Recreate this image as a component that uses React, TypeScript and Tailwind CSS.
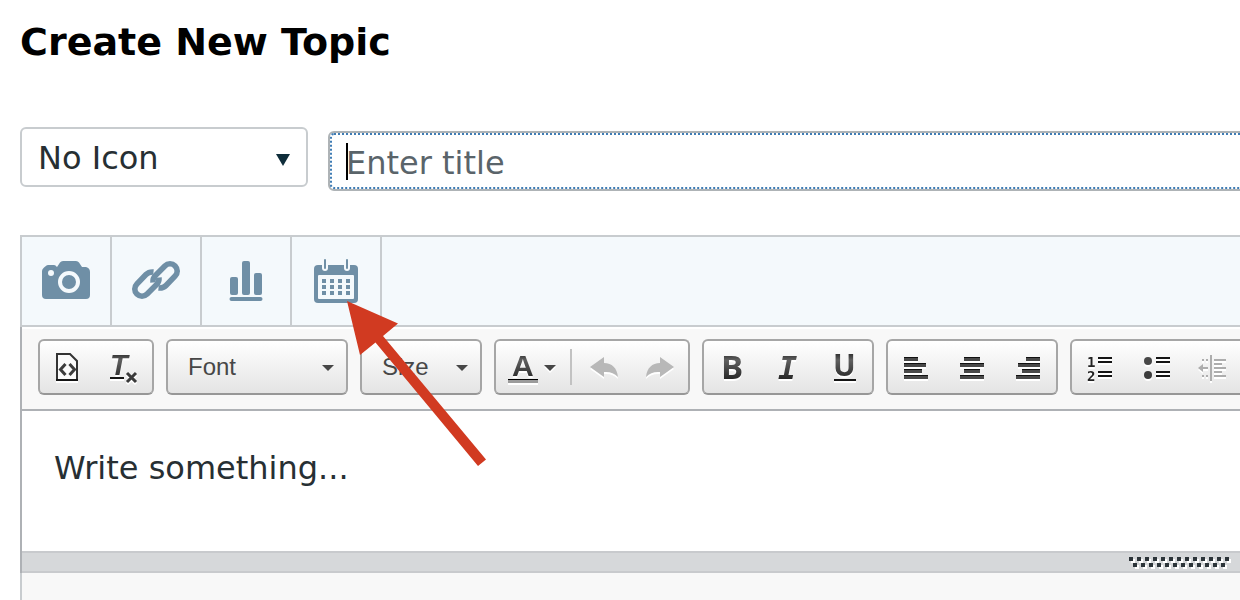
import type { ReactNode } from "react";

const verdana = "font-['DejaVu_Sans',sans-serif]";
const barFill = "url(#glyph-fill)";

function Tab({ label, children }: { label: string; children: ReactNode }) {
  return (
    <div className="relative border-r-2 border-[#c8cccf]">
      <button type="button" aria-label={label} className="block">
        <svg width="88" height="88" viewBox="0 0 88 88" fill="#6f8fa6">
          {children}
        </svg>
      </button>
    </div>
  );
}

function Group({ children }: { children: ReactNode }) {
  return (
    <div className="flex h-14 shrink-0 items-stretch rounded-md border-2 border-[#a6a6a6] border-b-[#979797] bg-linear-to-b from-white to-[#e4e4e4]">
      {children}
    </div>
  );
}

function Tool({ label, disabled, width = 56, children }: { label: string; disabled?: boolean; width?: number; children: ReactNode }) {
  return (
    <button type="button" aria-label={label} disabled={disabled} className="block shrink-0">
      <svg
        width={width}
        height="52"
        viewBox={`0 0 ${width} 52`}
        fill={barFill}
        className="drop-shadow-[0_2px_0_#ffffff]"
      >
        {children}
      </svg>
    </button>
  );
}

function Combo({ label, wide }: { label: string; wide?: boolean }) {
  return (
    <Group>
      <div className="grid items-center">
        <select
          aria-label={label}
          className={`${wide ? "w-[178px]" : "w-[118px]"} col-start-1 row-start-1 h-full appearance-none bg-transparent pl-5 font-['Liberation_Sans',Arial,sans-serif] text-2xl text-[#474747] outline-none`}
        >
          <option>{label}</option>
        </select>
        <svg width="12" height="6" viewBox="0 0 12 6" fill="#474747" className="pointer-events-none col-start-1 row-start-1 mr-3 mt-[2px] justify-self-end">
          <path d="M0 0H12L6 6Z" />
        </svg>
      </div>
    </Group>
  );
}

function Bars({ rows }: { rows: number[][] }) {
  return (
    <>
      {rows.map(([x, end], i) => (
        <g key={i}>
          <rect x={x} y={16 + i * 6} width={end - x} height="4" fill="#484848" />
          <rect x={x} y={16 + i * 6} width={end - x} height="1" fill="#111111" />
        </g>
      ))}
    </>
  );
}

function ListBars({ x }: { x: number }) {
  return (
    <>
      {[16, 20, 30, 34].map((y) => (
        <rect key={y} x={x} y={y} width="14" height="2" fill="#151515" />
      ))}
    </>
  );
}

function IndentShape() {
  return (
    <g fill="#adadad">
      <rect x="26" y="14" width="2" height="26" />
      <path d="M14 27l5-4v3h5v2h-5v3z" />
      {[18, 34].map((y) => (
        <g key={y}>
          <rect x="18" y={y} width="2" height="2" />
          <rect x="22" y={y} width="2" height="2" />
        </g>
      ))}
      {[12, 8, 12, 8, 12].map((w, i) => (
        <rect key={i} x="30" y={18 + i * 4} width={w} height="2" />
      ))}
    </g>
  );
}

const undoPath = "M14 26L28 16V22C36 22 41 27 42 36C38 32 34 30.500 28 31V36Z";

export default function App() {
  return (
    <main className={`${verdana} flex min-h-screen flex-col overflow-x-hidden bg-white pl-5 pt-5 text-[#272f33]`}>
      <svg width="0" height="0" className="absolute" aria-hidden="true">
        <defs>
          <linearGradient id="glyph-fill" gradientUnits="userSpaceOnUse" x1="0" y1="12" x2="0" y2="40">
            <stop offset="0" stopColor="#2a2a2a" />
            <stop offset="0.25" stopColor="#606060" />
            <stop offset="1" stopColor="#222222" />
          </linearGradient>
        </defs>
      </svg>

      <h1 className="text-[38px] font-bold leading-[44px] text-black">Create New Topic</h1>

      <div className="-mr-2 mt-[63px] flex items-start gap-5">
        <div className="grid shrink-0 items-center">
          <select
            aria-label="Topic icon"
            className="col-start-1 row-start-1 h-[60px] w-72 appearance-none rounded-md border-2 border-[#c8cccf] bg-white pl-4 pt-[2px] text-[32px] leading-none outline-none"
          >
            <option>No Icon</option>
          </select>
          <svg width="14" height="12" viewBox="0 0 14 12" fill="#0f2d3a" className="pointer-events-none col-start-1 row-start-1 mr-[18px] mt-[6px] justify-self-end">
            <path d="M0 0H14L7 12Z" />
          </svg>
        </div>
        <div className="relative mt-1 grow">
          <input
            type="text"
            aria-label="Title"
            placeholder="Enter title"
            className="h-[60px] w-full rounded-md border-2 border-[#aeb3b6] bg-white pl-4 pt-1 text-[32px] leading-none outline-2 -outline-offset-4 outline-dotted outline-[#3f7cb4] placeholder:text-[#5a646a]"
          />
          <span className="absolute left-[18px] top-3 h-[37px] w-[2px] bg-black" aria-hidden="true" />
        </div>
      </div>

      <section className="mt-11 flex grow flex-col" aria-label="Message">
        <div className="flex border-y-2 border-l-2 border-[#c8cccf] bg-[#f4f9fc]">
          <Tab label="Add photo">
            <path d="M20 34Q20 32 22 30.500L24.500 28.500Q25 28 26 28H32Q33 28 33.500 28.500L35 30L38 25.500Q39 24 41 24H54Q56 24 57 25.500L60 30H64Q68 31 68 35V58Q68 62 64 62H24Q20 62 20 58Z" />
            <circle cx="47" cy="45" r="9" fill="none" stroke="#f4f9fc" strokeWidth="4" />
            <circle cx="29" cy="36" r="3" fill="#f4f9fc" />
          </Tab>
          <Tab label="Add link">
            <g fill="none" stroke="#6f8fa6" strokeWidth="5.600">
              <path d="M41 45.500C40.800 43 41.300 40.500 43.400 38.400L52.900 28.900A7.200 7.200 0 0 1 63.100 39.100L54 48.500C52 50.500 49.500 51.300 46.500 51" />
              <path d="M47 40.500C47.200 43 46.700 45.500 44.600 47.600L35.100 57.100A7.200 7.200 0 0 1 24.900 46.900L34 37.500C36 35.500 38.500 34.700 41.500 35" />
            </g>
          </Tab>
          <Tab label="Add poll">
            <rect x="28" y="40" width="8" height="18" rx="2" />
            <rect x="40" y="24" width="8" height="34" rx="2" />
            <rect x="52" y="36" width="8" height="22" rx="2" />
            <rect x="27.500" y="60" width="33" height="4" rx="2" />
          </Tab>
          <div className="relative">
            <Tab label="Add event">
              <rect x="22" y="28" width="44" height="38" rx="4" />
              <rect x="26" y="38" width="36" height="24" rx="1" fill="#f4f9fc" />
              {[33, 55].map((x) => (
                <g key={x}>
                  <rect x={x - 3} y="24" width="6" height="10" rx="3" fill="#f4f9fc" />
                  <rect x={x - 1} y="22" width="2" height="10" rx="1" />
                </g>
              ))}
              {[42, 48, 54].map((y) =>
                [30, 38, 46, 54].map((x) => <rect key={`${x}-${y}`} x={x} y={y} width="4" height="4" />),
              )}
            </Tab>
            <svg
              width="140"
              height="166"
              viewBox="0 0 140 166"
              fill="#d13a21"
              className="pointer-events-none absolute left-[55px] top-16 z-10"
              aria-hidden="true"
            >
              <path d="M0 0L51 22.500L36 35L139 158.500L131 165L28.500 41.500L13 54Z" />
            </svg>
          </div>
        </div>

        <div className="flex gap-3 overflow-hidden border-b-2 border-l-2 border-[#aeb1b5] bg-[#f8f8f8] pb-[14px] pl-4 pt-3 shadow-[inset_0_2px_0_#ffffff]">
          <Group>
            <Tool label="Source">
              <path d="M17 13H30L37 20V39H17Z" fill="#fafafa" stroke="#333333" strokeWidth="2" />
              <path d="M16 39H38" stroke="#151515" strokeWidth="2" />
              <path d="M25.500 23L20.500 28.500L25.500 34M29.500 23L34.500 28.500L29.500 34" fill="none" stroke="#3c3c3c" strokeWidth="3" />
            </Tool>
            <Tool label="Remove format">
              <text x="14" y="34" className="font-['Liberation_Sans',sans-serif] text-[29px] font-bold italic">T</text>
              <rect x="14" y="36" width="14" height="2" fill="#151515" />
              <path d="M31 32L40 41M40 32L31 41" stroke="#3a3a3a" strokeWidth="3" />
            </Tool>
          </Group>
          <Combo label="Font" wide />
          <Combo label="Size" />
          <Group>
            <Tool label="Text color" width={74}>
              <text x="16" y="35" className="font-['Liberation_Sans',sans-serif] text-[30px] font-bold">A</text>
              <rect x="12" y="38" width="30" height="1" fill="#000000" />
              <rect x="12" y="39" width="30" height="3" fill="#9b9b9b" />
              <path d="M48 24H60L54 30Z" fill="#474747" />
            </Tool>
            <span className="my-2 mr-1 w-[2px] bg-[#c2c2c2]" />
            <Tool label="Undo" disabled>
              <path d={undoPath} fill="#b8b8b8" />
            </Tool>
            <Tool label="Redo" disabled>
              <path d={undoPath} fill="#b8b8b8" transform="matrix(-1 0 0 1 56 0)" />
            </Tool>
          </Group>
          <Group>
            <Tool label="Bold">
              <text x="17" y="38" className="font-['Open_Sans',sans-serif] text-[33px] font-bold">B</text>
            </Tool>
            <Tool label="Italic">
              <text x="18" y="38" className="font-['DejaVu_Sans_Mono',monospace] text-[32px] font-bold italic">I</text>
            </Tool>
            <Tool label="Underline">
              <text x="17" y="35" className="font-['Open_Sans',sans-serif] text-[30px] font-bold">U</text>
              <rect x="18" y="38" width="22" height="2" fill="#151515" />
            </Tool>
          </Group>
          <Group>
            <Tool label="Align left">
              <Bars rows={[[16, 30], [16, 38], [16, 34], [16, 40]]} />
            </Tool>
            <Tool label="Align center">
              <Bars rows={[[20, 36], [16, 40], [20, 36], [16, 40]]} />
            </Tool>
            <Tool label="Align right">
              <Bars rows={[[26, 40], [18, 40], [22, 40], [16, 40]]} />
            </Tool>
          </Group>
          <Group>
            <Tool label="Numbered list">
              <text x="15" y="26" fill="#222222" className="font-['DejaVu_Sans_Mono',monospace] text-[14px] font-bold">1</text>
              <text x="15" y="40" fill="#222222" className="font-['DejaVu_Sans_Mono',monospace] text-[14px] font-bold">2</text>
              <ListBars x={26} />
            </Tool>
            <Tool label="Bulleted list">
              <circle cx="20" cy="20" r="4" fill="#484848" />
              <circle cx="20" cy="34" r="4" fill="#3c3c3c" />
              <ListBars x={28} />
            </Tool>
            <Tool label="Decrease indent" disabled>
              <IndentShape />
            </Tool>
            <Tool label="Increase indent" disabled>
              <g transform="matrix(-1 0 0 1 56 0)">
                <IndentShape />
              </g>
            </Tool>
          </Group>
        </div>

        <div className="border-l-2 border-[#aeb1b5]">
          <textarea
            aria-label="Message body"
            placeholder="Write something..."
            className="block h-[140px] w-full resize-none bg-white pl-8 pt-[38px] text-[32px] leading-[38px] outline-none placeholder:text-[#272f33]"
          />
          <div className="flex justify-end border-y-2 border-[#c8cacd] bg-[#d6d8da] pr-2">
            <svg width="103" height="18" viewBox="0 0 103 18" aria-hidden="true">
              {Array.from({ length: 25 }, (_, i) => (
                <rect key={`s${i}`} x={i * 4 + 2} y={i % 2 ? 12 : 6} width="4" height="4" fill="#ffffff" />
              ))}
              {Array.from({ length: 25 }, (_, i) => (
                <rect key={`d${i}`} x={i * 4} y={i % 2 ? 10 : 4} width="4" height="4" fill="#2d353a" />
              ))}
            </svg>
          </div>
        </div>
        <div className="min-h-[27px] grow border-l-2 border-[#c8cccf] bg-[#f8f8f8]" />
      </section>
    </main>
  );
}
